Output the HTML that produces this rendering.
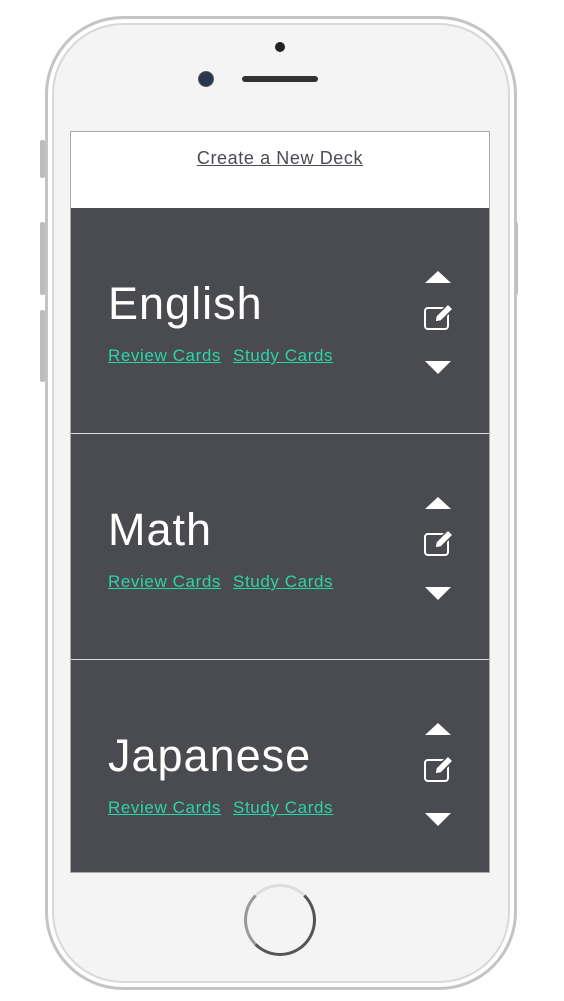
<!DOCTYPE html>
<html><head><style>
body{margin:0;width:564px;height:1001px;background:#fff;position:relative;overflow:hidden;font-family:"Liberation Sans",sans-serif}
.abs{position:absolute}
.phone{left:45px;top:16px;width:466px;height:968px;border-radius:78px;background:#f4f4f4;border:3px solid #c4c4c4;box-shadow:inset 0 0 0 4px #fff,inset 0 0 0 6px #d8d8d8}
.btn{background:#bdbdbd;width:5px;border-radius:2px}
.screen{left:70px;top:131px;width:420px;height:742px;background:#fff;border:1px solid #aaa;box-sizing:border-box}
.create{left:70px;top:148px;width:420px;text-align:center;font-size:18px;letter-spacing:0.6px;color:#4a4c52;text-decoration:underline}
.card{left:71px;width:418px;background:#4a4b50}
.t{position:absolute;left:37px;color:#fff;font-size:45px;letter-spacing:1px}
.l{position:absolute;left:37px;color:#2bd4a8;font-size:17px;letter-spacing:0.6px;text-decoration:underline}
.l span{margin-right:12px}
.ic{position:absolute;left:352px}
</style></head><body>
<div class="abs btn" style="left:40px;top:140px;height:38px"></div>
<div class="abs btn" style="left:40px;top:222px;height:73px"></div>
<div class="abs btn" style="left:40px;top:310px;height:72px"></div>
<div class="abs btn" style="left:513px;top:222px;height:73px"></div>
<div class="abs phone"></div>
<div class="abs" style="left:275px;top:42px;width:10px;height:10px;border-radius:50%;background:#222"></div>
<div class="abs" style="left:198px;top:71px;width:14px;height:14px;border-radius:50%;background:#2a3550;border:1px solid #555"></div>
<div class="abs" style="left:242px;top:76px;width:76px;height:6px;border-radius:3px;background:#333"></div>
<div class="abs" style="left:244px;top:884px;width:66px;height:66px;border-radius:50%;border:3px solid #555;border-top-color:#ddd;border-left-color:#999"></div>
<div class="abs screen"></div>
<div class="abs create">Create a New Deck</div>

<div class="abs card" style="top:208px;height:225px">
<div class="t" style="top:70px">English</div>
<div class="l" style="top:138px"><span>Review Cards</span>Study Cards</div>
<svg class="ic" style="top:58px" width="32" height="120" viewBox="0 0 32 120"><path d="M2 17 L15 5 L28 17Z" fill="#fff"/><rect x="2" y="42" width="23" height="21" rx="3" fill="none" stroke="#fff" stroke-width="2"/><path d="M12 56 L13 50 L25 38 L30 43 L18 55Z" fill="#fff" stroke="#4a4b50" stroke-width="1.5"/><path d="M2 95 L28 95 L15 108Z" fill="#fff"/></svg>
</div>
<div class="abs" style="left:71px;top:433px;width:418px;height:1px;background:#ddd"></div>
<div class="abs card" style="top:434px;height:225px">
<div class="t" style="top:70px">Math</div>
<div class="l" style="top:138px"><span>Review Cards</span>Study Cards</div>
<svg class="ic" style="top:58px" width="32" height="120" viewBox="0 0 32 120"><path d="M2 17 L15 5 L28 17Z" fill="#fff"/><rect x="2" y="42" width="23" height="21" rx="3" fill="none" stroke="#fff" stroke-width="2"/><path d="M12 56 L13 50 L25 38 L30 43 L18 55Z" fill="#fff" stroke="#4a4b50" stroke-width="1.5"/><path d="M2 95 L28 95 L15 108Z" fill="#fff"/></svg>
</div>
<div class="abs" style="left:71px;top:659px;width:418px;height:1px;background:#ddd"></div>
<div class="abs card" style="top:660px;height:212px">
<div class="t" style="top:70px">Japanese</div>
<div class="l" style="top:138px"><span>Review Cards</span>Study Cards</div>
<svg class="ic" style="top:58px" width="32" height="120" viewBox="0 0 32 120"><path d="M2 17 L15 5 L28 17Z" fill="#fff"/><rect x="2" y="42" width="23" height="21" rx="3" fill="none" stroke="#fff" stroke-width="2"/><path d="M12 56 L13 50 L25 38 L30 43 L18 55Z" fill="#fff" stroke="#4a4b50" stroke-width="1.5"/><path d="M2 95 L28 95 L15 108Z" fill="#fff"/></svg>
</div>
</body></html>
